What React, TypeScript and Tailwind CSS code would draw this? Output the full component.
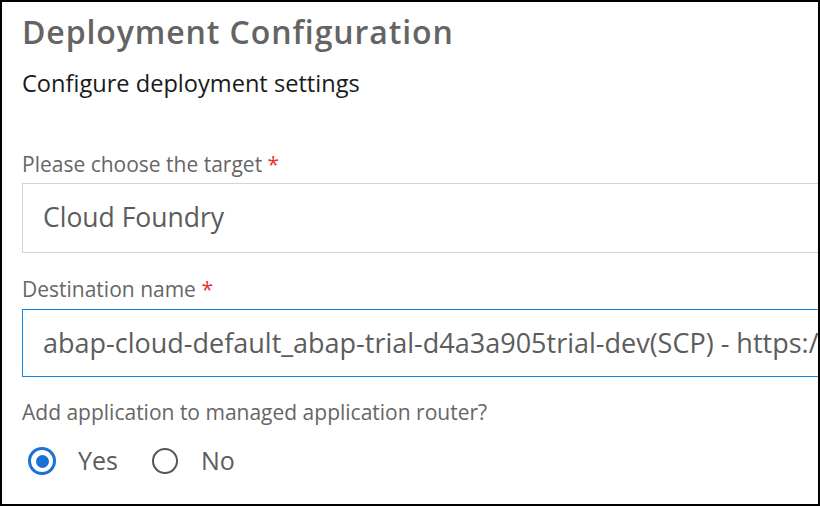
import React, { useState } from 'react';

const font = { fontFamily: '"Open Sans", "Noto Sans", sans-serif' };

const Label: React.FC<{ text: string; className?: string }> = ({ text, className }) => (
  <div className={`text-[21px] leading-[28px] text-[#666666] ${className ?? ''}`}>
    {text} <span className="text-[#e9322e]">*</span>
  </div>
);

export default function App() {
  const [router, setRouter] = useState<'yes' | 'no'>('yes');

  return (
    <div style={font} className="w-[820px] h-[506px] border-2 border-black bg-white overflow-hidden">
      <div className="pl-5 pt-[10px]">
        {/* Header */}
        <h1 className="text-[32px] leading-[40px] font-semibold tracking-[0.9px] text-[#646464]">
          Deployment Configuration
        </h1>
        <p className="mt-[15px] text-[23.6px] leading-[32px] text-[#1a1a1a]">Configure deployment settings</p>

        {/* Target */}
        <Label text="Please choose the target" className="mt-[51px]" />
        <div className="mt-[5px] w-[900px] h-[70px] border border-[#d3d3d3] flex items-center pl-5 text-[26.5px] text-[#5c5c5c]">
          Cloud Foundry
        </div>

        {/* Destination */}
        <Label text="Destination name" className="mt-[22px]" />
        <div className="mt-[6px] w-[900px] h-[68px] border border-[#0a8ae6] flex items-center pl-5 text-[27px] text-[#5c5c5c] whitespace-nowrap overflow-hidden">
          abap-cloud-default_abap-trial-d4a3a905trial-dev(SCP) - https://
        </div>

        {/* Router */}
        <div className="mt-[21px] text-[21px] leading-[28px] text-[#666666]">
          Add application to managed application router?
        </div>
        <div className="mt-[15px] flex items-center h-[40px] pl-[6px]">
          <button onClick={() => setRouter('yes')} className="flex items-center">
            <span
              className={`w-[28px] h-[28px] rounded-full flex items-center justify-center ${
                router === 'yes' ? 'border-[3px] border-[#1a73d4]' : 'border-2 border-[#555555]'
              }`}
            >
              {router === 'yes' && <span className="w-[13px] h-[13px] rounded-full bg-[#1a73d4]" />}
            </span>
            <span className="ml-[22px] text-[25px] text-[#5c5c5c]">Yes</span>
          </button>
          <button onClick={() => setRouter('no')} className="flex items-center ml-[34px]">
            <span
              className={`w-[26px] h-[26px] rounded-full flex items-center justify-center ${
                router === 'no' ? 'border-[3px] border-[#1a73d4]' : 'border-2 border-[#555555]'
              }`}
            >
              {router === 'no' && <span className="w-[13px] h-[13px] rounded-full bg-[#1a73d4]" />}
            </span>
            <span className="ml-[23px] text-[25px] text-[#5c5c5c]">No</span>
          </button>
        </div>
      </div>
    </div>
  );
}
